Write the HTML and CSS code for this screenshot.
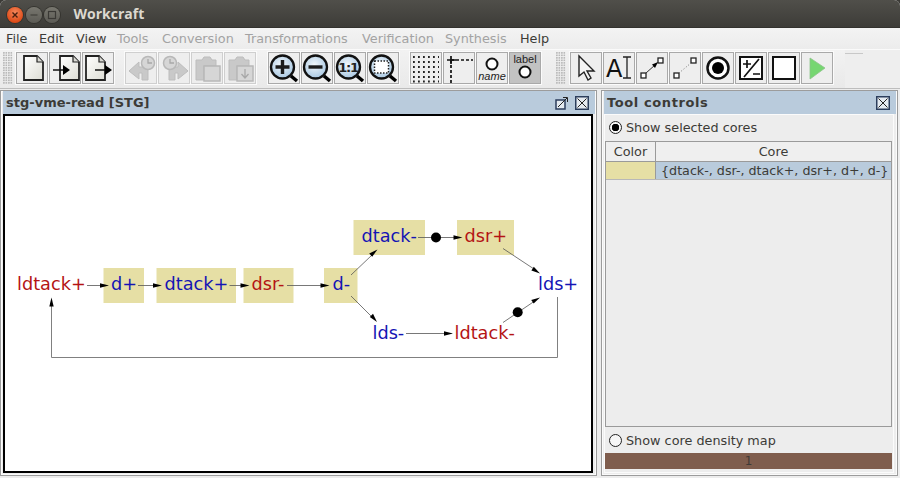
FILE: index.html
```html
<!DOCTYPE html>
<html>
	<head>
		<meta charset="UTF-8">
		<title>Workcraft</title>
		<link rel="stylesheet" href="styles.css">
	</head>
	<body>
		<div class="window">
			<div class="titlebar">
				<div class="wbtn wclose"><svg width="16" height="16" viewBox="0 0 16 16"><path class="wx" d="M5.500 5.500l5 5M10.500 5.500l-5 5"/></svg></div>
				<div class="wbtn wmin"><svg width="16" height="16" viewBox="0 0 16 16"><path class="wsym" d="M4.500 8h7"/></svg></div>
				<div class="wbtn wmax"><svg width="16" height="16" viewBox="0 0 16 16"><rect class="wsym" x="4.500" y="4.500" width="7" height="7"/></svg></div>
				<span class="apptitle">Workcraft</span>
			</div>

			<div class="menubar">
				<span>File</span>
				<span>Edit</span>
				<span>View</span>
				<span class="off">Tools</span>
				<span class="off">Conversion</span>
				<span class="off">Transformations</span>
				<span class="off">Verification</span>
				<span class="off">Synthesis</span>
				<span>Help</span>
			</div>

			<div class="toolbar">
				<div class="tools">
					<div class="grip"></div>
					<div class="group">
						<button class="tb"><svg viewBox="0 0 32 32"><path fill="url(#paper)" class="doc" d="M8 4h13l6 6v18H8z"/><path class="fold" d="M21 4v6h6"/></svg></button>
						<button class="tb"><svg viewBox="0 0 32 32"><path fill="url(#paper)" class="doc" d="M11 4h13l6 6v18H11z"/><path class="fold" d="M24 4v6h6"/><path class="ln" d="M4 18h12"/><path class="fillk" d="M14 13l7 5-7 5z"/></svg></button>
						<button class="tb"><svg viewBox="0 0 32 32"><path fill="url(#paper)" class="doc" d="M4 4h13l6 6v18H4z"/><path class="fold" d="M17 4v6h6"/><path class="ln" d="M13 18h12"/><path class="fillk" d="M23 13l7 5-7 5z"/></svg></button>
					</div>
					<div class="group wide">
						<button class="tb dim"><svg viewBox="0 0 32 32"><path class="gs" d="M4 19l10-9v5h9v13h-6v-7h-3v6z"/><circle class="gc" cx="23" cy="11" r="6.500"/><path class="gl" d="M23 7v4h4"/></svg></button>
						<button class="tb dim"><svg viewBox="0 0 32 32"><path class="gs" d="M30 19l-10-9v5h-9v13h6v-7h3v6z"/><circle class="gc" cx="12" cy="11" r="6.500"/><path class="gl" d="M12 7v4h4"/></svg></button>
						<button class="tb dim"><svg viewBox="0 0 32 32"><path class="gs" d="M5 8h6l2-3h6l2 3h4v6H13v14H5z"/><rect class="gc" x="13" y="14" width="16" height="15"/></svg></button>
						<button class="tb dim"><svg viewBox="0 0 32 32"><path class="gs" d="M5 8h6l2-3h6l2 3h4v6H13v14H5z"/><rect class="gc" x="13" y="14" width="16" height="15"/><path class="gl" d="M21 17v8M17.500 22l3.500 4 3.500-4"/></svg></button>
					</div>
					<div class="group">
						<button class="tb"><svg viewBox="0 0 32 32"><circle fill="url(#glass)" class="lens" cx="14.500" cy="15" r="11.500"/><path class="handle" d="M23 24l6 5"/><path class="bar" d="M7.500 15h14M14.500 8v14"/></svg></button>
						<button class="tb"><svg viewBox="0 0 32 32"><circle fill="url(#glass)" class="lens" cx="14.500" cy="15" r="11.500"/><path class="handle" d="M23 24l6 5"/><path class="bar" d="M7.500 15h14"/></svg></button>
						<button class="tb"><svg viewBox="0 0 32 32"><circle fill="url(#glass)" class="lens" cx="14.500" cy="15" r="11.500"/><path class="handle" d="M23 24l6 5"/><text class="onetoone" x="14" y="20">1:1</text></svg></button>
						<button class="tb"><svg viewBox="0 0 32 32"><circle fill="url(#glass)" class="lens" cx="14.500" cy="15" r="11.500"/><path class="handle" d="M23 24l6 5"/><rect class="fitbox" x="7.500" y="9" width="14" height="12"/></svg></button>
					</div>
					<div class="group">
						<button class="tb"><svg viewBox="0 0 32 32"><path class="dots" d="M3 5h26M3 10h26M3 15h26M3 20h26M3 25h26M3 29.500h26"/></svg></button>
						<button class="tb"><svg viewBox="0 0 32 32"><path class="dash" d="M8 8h22M8 8v23"/><path class="ln" d="M4 8h9M8 4v8"/></svg></button>
						<button class="tb"><svg viewBox="0 0 32 32"><circle class="ring" cx="16" cy="12" r="5.500"/><text class="name" x="16" y="28">name</text></svg></button>
						<button class="tb on"><svg viewBox="0 0 32 32"><text class="label" x="16" y="11">label</text><circle class="ring" cx="16" cy="20" r="5.500"/></svg></button>
					</div>
					<div class="grip"></div>
					<div class="group last">
						<button class="tb"><svg viewBox="0 0 32 32"><path class="cursor" d="M9 4v20l5-4 4 8 3-2-4-7h7z"/></svg></button>
						<button class="tb"><svg viewBox="0 0 32 32"><text class="atext" x="3" y="25">A</text><path class="beam" d="M20 5h8M24 5v21M20 26h8"/></svg></button>
						<button class="tb"><svg viewBox="0 0 32 32"><rect class="node" x="5" y="21" width="5" height="5"/><rect class="node" x="22" y="6" width="5" height="5"/><path class="thin" d="M10 21l9-8"/><path class="fillk" d="M22 10l-6 2.500 3 3.500z"/></svg></button>
						<button class="tb"><svg viewBox="0 0 32 32"><rect class="node" x="5" y="21" width="5" height="5"/><rect class="node" x="22" y="6" width="5" height="5"/><path class="dotted" d="M10 21l12-10"/></svg></button>
						<button class="tb"><svg viewBox="0 0 32 32"><circle class="ring thick" cx="16" cy="16" r="10.500"/><circle class="fillk" cx="16" cy="16" r="6"/></svg></button>
						<button class="tb"><svg viewBox="0 0 32 32"><rect class="box" x="5" y="5" width="22" height="22"/><path class="ln" d="M8 12h8M12 8v8M18 22h7M9 25L24 7"/></svg></button>
						<button class="tb"><svg viewBox="0 0 32 32"><rect class="box" x="5" y="5" width="22" height="22"/></svg></button>
						<button class="tb"><svg viewBox="0 0 32 32"><path class="play" d="M9 6l15 10-15 11z"/></svg></button>
					</div>
				</div>
				<div class="toolbar-rest"></div>
			</div>

			<div class="panes">
				<div class="pane editor">
					<div class="panehead">
						<span>stg-vme-read [STG]</span>
						<div class="headbtns">
							<div class="hbtn"><svg viewBox="0 0 14 14"><rect class="hbox" x="1" y="4" width="9" height="9"/><path class="hline" d="M3 11l9-9M8 1.500h4.500V6"/></svg></div>
							<div class="hbtn"><svg viewBox="0 0 14 14"><rect class="hbox" x="0.750" y="0.750" width="12.500" height="12.500"/><path class="hline" d="M2.500 2.500l9 9M11.500 2.500l-9 9"/></svg></div>
						</div>
					</div>
					<div class="canvas">
						<svg class="stg" viewBox="5 116 586 355">
							<rect class="tran" x="103.500" y="268" width="40.500" height="35"/>
							<rect class="tran" x="156.500" y="268" width="79.500" height="35"/>
							<rect class="tran" x="243.500" y="268" width="50" height="35"/>
							<rect class="tran" x="324" y="268" width="33.500" height="35"/>
							<rect class="tran" x="353.500" y="220" width="71.500" height="35"/>
							<rect class="tran" x="457" y="220" width="57" height="35"/>

							<path class="arc" d="M87 285.500H102"/>
							<path class="head" d="M109 285.500l-9-2.200v4.400z"/>
							<path class="arc" d="M138 285.500H155"/>
							<path class="head" d="M162 285.500l-9-2.200v4.400z"/>
							<path class="arc" d="M229.500 285.500H242"/>
							<path class="head" d="M249.500 285.500l-9-2.200v4.400z"/>
							<path class="arc" d="M287 285.500H322"/>
							<path class="head" d="M329.500 285.500l-9-2.200v4.400z"/>
							<path class="arc" d="M351 275L372 255"/>
							<path class="head" d="M377.500 249.500l-8.300 4 3 3.200z"/>
							<path class="arc" d="M351 296L372 317"/>
							<path class="head" d="M377 322l-4-8.200-3.200 3.100z"/>
							<path class="arc" d="M406 333.500H446"/>
							<path class="head" d="M453 333.500l-9-2.200v4.400z"/>
							<path class="arc" d="M418 237.500H455"/>
							<path class="head" d="M462.500 237.500l-9-2.200v4.400z"/>
							<circle class="token" cx="436" cy="237.500" r="5"/>
							<path class="arc" d="M503 248.500L534 269"/>
							<path class="head" d="M540 273.500l-6.200-6.800-2.400 3.700z"/>
							<path class="arc" d="M503 322.500L534 301.500"/>
							<path class="head" d="M540 297.500l-8.800 2.400 2.500 3.700z"/>
							<circle class="token" cx="517.700" cy="312.300" r="5"/>
							<path class="arc long" d="M557.500 297V357.500H51.500V304"/>
							<path class="head" d="M51.500 297.500l-2.200 9h4.400z"/>

							<text class="red" x="17" y="290">ldtack+</text>
							<text class="blue" x="111" y="290">d+</text>
							<text class="blue" x="164.500" y="290">dtack+</text>
							<text class="red" x="251.500" y="290">dsr-</text>
							<text class="blue" x="332.500" y="290">d-</text>
							<text class="blue" x="361.500" y="242">dtack-</text>
							<text class="red" x="464.500" y="242">dsr+</text>
							<text class="blue" x="538" y="290">lds+</text>
							<text class="blue" x="372.500" y="339">lds-</text>
							<text class="red" x="454.500" y="339">ldtack-</text>
						</svg>
					</div>
				</div>

				<div class="pane controls">
					<div class="panehead">
						<span class="spaced">Tool controls</span>
						<div class="headbtns">
							<div class="hbtn"><svg viewBox="0 0 14 14"><rect class="hbox" x="0.750" y="0.750" width="12.500" height="12.500"/><path class="hline" d="M2.500 2.500l9 9M11.500 2.500l-9 9"/></svg></div>
						</div>
					</div>
					<div class="controlbody">
						<div class="radio-row upper"><span class="radio checked"></span>Show selected cores</div>
						<div class="tablepane">
							<div class="thead">
								<div class="th">Color</div>
								<div class="th">Core</div>
							</div>
							<div class="trow">
								<div class="swatch"></div>
								<div class="cell">{dtack-, dsr-, dtack+, dsr+, d+, d-}</div>
							</div>
						</div>
						<div class="radio-row"><span class="radio"></span>Show core density map</div>
						<div class="density">1</div>
					</div>
				</div>
			</div>
		</div>

		<svg class="defs" width="0" height="0">
			<defs>
				<linearGradient id="paper" x1="0" y1="0" x2="1" y2="1">
					<stop offset="0" stop-color="#ffffff"/>
					<stop offset="1" stop-color="#dcdcd4"/>
				</linearGradient>
				<radialGradient id="glass" cx="0.45" cy="0.4" r="0.6">
					<stop offset="0" stop-color="#f2f7fb"/>
					<stop offset="1" stop-color="#a9c8e2"/>
				</radialGradient>
			</defs>
		</svg>
	</body>
</html>
```

FILE: styles.css
```css
* {margin: 0; padding: 0; box-sizing: border-box;}
html, body {width: 900px; height: 478px; overflow: hidden; background: #3c3b37;}
body {font-family: "DejaVu Sans", sans-serif; font-size: 12.8px; color: #3c3b37;}
.defs {display: block;}

.window {
	width: 900px; height: 478px;
	display: flex;
	flex-direction: column;
	background: #ededed;
	border-radius: 6px 6px 0 0;
	overflow: hidden;
}

/* title bar */
.titlebar {
	height: 28px;
	flex: none;
	display: flex;
	align-items: center;
	padding-left: 7px;
	gap: 2.500px;
	background: linear-gradient(#504f4a, #3d3c38);
	border-bottom: 1px solid #33322e;
}
.wbtn {
	width: 16px; height: 16px;
	border-radius: 50%;
	margin-top: 2px;
	display: flex;
}
.wclose {background: radial-gradient(circle at 50% 35%, #f5885c, #dd4814 75%); box-shadow: 0 0 0 1px #35342f;}
.wmin, .wmax {background: linear-gradient(#78776f, #5c5b55); box-shadow: 0 0 0 1px #35342f;}
.wx {stroke: #4a1f0e; stroke-width: 1.4; fill: none;}
.wsym {stroke: #3a3935; stroke-width: 1.2; fill: none;}
.apptitle {
	margin-left: 11px;
	font-family: "Open Sans", sans-serif;
	font-weight: 700;
	font-size: 14px;
	color: #dcd8cf;
}

/* menu */
.menubar {
	height: 21px;
	flex: none;
	display: grid;
	grid-template-columns: 33px 37px 41px 45px 83px 117px 83px 75px auto;
	align-items: center;
	justify-content: start;
	padding-left: 6px;
	background: linear-gradient(#f3f3f3, #ececec);
	color: #3c3b37;
}
.menubar .off {color: #a3a3a3;}

/* toolbar */
.toolbar {
	height: 40px;
	flex: none;
	display: flex;
	align-items: flex-start;
	border-top: 1px solid #fafafa;
	border-bottom: 1px solid #bdbdbd;
	background: #eeeeee;
}
.tools {
	width: 845px; height: 38px;
	flex: none;
	display: flex;
	align-items: flex-start;
	padding: 2px 0 0 3px;
	background: linear-gradient(#f2f2f2, #e9e9e9);
}
.toolbar-rest {
	flex: 1;
	margin-top: 3px;
	margin-right: 37px;
	height: 1px;
	background: #c8c8c8;
}
.grip {
	width: 10px; height: 32px;
	flex: none;
	background-image: radial-gradient(circle at 1px 1px, #b8b8b8 0.8px, transparent 1px);
	background-size: 2.500px 2.500px;
}
.group {display: flex; gap: 1px; margin-left: 3px; margin-right: 8px;}
.group.wide {margin-right: 9px;}
.group + .grip {margin-left: 7px;}
.group.last {margin-left: 4px; margin-right: 0;}
.tb {
	width: 32px; height: 32px;
	flex: none;
	display: block;
	background: #eeeeee;
	border: 1px solid #a9a9a9;
	box-shadow: 0 0 0 1px #fbfbfb;
}
.tb svg {display: block; width: 32px; height: 32px; margin: -1px;}
.tb.dim {border-color: #cfcfcf;}
.tb.on {background: #c2c2c2;}

/* icon parts */
.doc {stroke: #222; stroke-width: 1.8;}
.fold {fill: #d8d8d2; stroke: #222; stroke-width: 1.2;}
.ln {stroke: #111; stroke-width: 1.7; fill: none;}
.fillk {fill: #000;}
.gs {fill: #c9c9c9; stroke: #bdbdbd;}
.gc {fill: #d6d6d6; stroke: #b8b8b8; stroke-width: 1.5;}
.gl {fill: none; stroke: #a8a8a8; stroke-width: 1.3;}
.lens {stroke: #111; stroke-width: 2.300;}
.handle {stroke: #000; stroke-width: 3.500;}
.bar {stroke: #1c1c1c; stroke-width: 3.400; fill: none;}
.onetoone {font-family: "DejaVu Sans", sans-serif; font-size: 13px; font-weight: 700; text-anchor: middle; fill: #222; letter-spacing: -1.200px;}
.fitbox {fill: #fff; stroke: #222; stroke-width: 1.500; stroke-dasharray: 1.500 1.500;}
.dots {stroke: #222; stroke-width: 1.800; stroke-dasharray: 1.800 3.200; fill: none;}
.dash {stroke: #111; stroke-width: 1.700; stroke-dasharray: 3 2; fill: none;}
.ring {fill: #fff; stroke: #111; stroke-width: 2;}
.ring.thick {stroke-width: 2.500;}
.name {font-family: "Liberation Sans", sans-serif; font-style: italic; font-size: 11px; text-anchor: middle; fill: #222;}
.label {font-family: "Liberation Sans", sans-serif; font-size: 11px; text-anchor: middle; fill: #222;}
.cursor {fill: #f4f4f4; stroke: #222; stroke-width: 1.400;}
.atext {font-family: "DejaVu Sans", sans-serif; font-size: 24px; fill: #111;}
.beam {stroke: #222; stroke-width: 1.300; fill: none;}
.node {fill: #fff; stroke: #222; stroke-width: 1.300;}
.thin {stroke: #333; stroke-width: 1; fill: none;}
.dotted {stroke: #777; stroke-width: 1; stroke-dasharray: 1 2; fill: none;}
.box {fill: #fff; stroke: #111; stroke-width: 2;}
.play {fill: #76d671; stroke: #8cc488; stroke-width: 0.800;}

/* panes */
.panes {
	flex: 1;
	display: flex;
	justify-content: space-between;
	padding: 1px 2px 2px 0;
	min-height: 0;
}
.pane {
	display: flex;
	flex-direction: column;
	border: 1px solid #9c9c9c;
	padding: 0 1px 2px 2px;
	box-shadow: inset 0 0 0 1px #fbfbfb;
}
.editor {width: 597px;}
.controls {width: 297px;}
.panehead {
	height: 23px;
	flex: none;
	display: flex;
	align-items: center;
	justify-content: space-between;
	padding: 0 3px;
	background: #b9cbdc;
	font-weight: 700;
	font-size: 13px;
	color: #3c3b37;
}
.panehead .spaced {letter-spacing: 0.6px;}
.headbtns {display: flex; gap: 6px; margin-right: 3px;}
.hbtn {width: 14px; height: 14px;}
.hbtn svg {display: block; width: 14px; height: 14px;}
.hbox {fill: #e4eaf0; stroke: #2c3e5c; stroke-width: 1.500;}
.hline {fill: none; stroke: #222; stroke-width: 1;}
.canvas {
	flex: 1;
	min-height: 0;
	margin-right: 2px;
	border: 2px solid #000;
	background: #fff;
}
.stg {display: block; width: 100%; height: 100%;}
.tran {fill: #e6dfa5;}
.arc {fill: none; stroke: #555; stroke-width: 0.800;}
.arc.long {stroke: #808080; stroke-width: 1;}
.head {fill: #000;}
.token {fill: #000;}
.stg text {font-family: "DejaVu Sans", sans-serif; font-size: 17.700px;}
.stg .red {fill: #b41414;}
.stg .blue {fill: #1414b4;}

/* tool controls */
.controlbody {
	flex: 1;
	min-height: 0;
	margin-right: 2px;
	display: flex;
	flex-direction: column;
	border: 1px solid #fbfbfb;
	padding-right: 1px;
	background: #ededed;
}
.radio-row {
	height: 26px;
	flex: none;
	display: flex;
	align-items: center;
	gap: 4px;
	padding-left: 4px;
	color: #3c3b37;
}
.radio-row.upper {padding-bottom: 2px;}
.radio {
	width: 13px; height: 13px;
	flex: none;
	border-radius: 50%;
	border: 1.800px solid #222;
	background: #f6f6f6;
}
.radio.checked {background: radial-gradient(circle, #000 3.500px, #f6f6f6 4px);}
.tablepane {
	flex: 1;
	min-height: 0;
	border: 1px solid #9a9a9a;
}
.thead {display: grid; grid-template-columns: 50px 1fr; height: 20px; border-bottom: 1px solid #9a9a9a;}
.th {display: flex; align-items: center; justify-content: center; background: #efefef; border-right: 1px solid #9a9a9a;}
.th:last-child {border-right: none;}
.trow {display: grid; grid-template-columns: 50px 1fr; height: 18px; border-bottom: 1px solid #b8b8b8;}
.swatch {background: #e6dfa5; border-right: 1px solid #9a9a9a;}
.cell {
	background: #b9cbdc;
	display: flex;
	align-items: center;
	padding-left: 5px;
	white-space: nowrap;
	font-size: 12.700px;
	color: #3c3b37;
}
.density {
	height: 16px;
	flex: none;
	background: #7f5d4d;
	display: flex;
	align-items: center;
	justify-content: center;
	color: #3f3a36;
	font-size: 12px;
	margin-bottom: 3px;
}
```
